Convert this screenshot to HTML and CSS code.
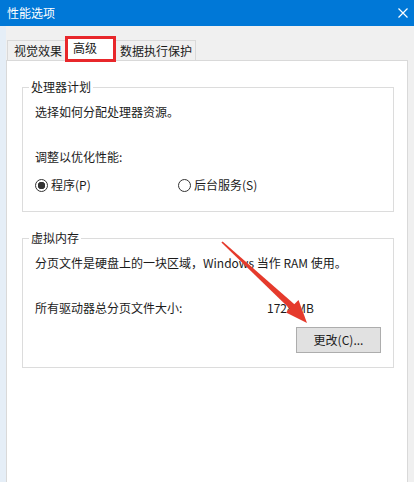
FILE: index.html
```html
<!DOCTYPE html>
<html lang="zh-CN">

<head>
  <meta charset="UTF-8" />
  <meta name="viewport" content="width=device-width, initial-scale=1.0" />
  <title>性能选项</title>
  <link rel="stylesheet" href="styles.css">
</head>

<body>
  <div class="titlebar">
    <span class="title">性能选项</span>
    <svg class="close" viewBox="0 0 10 10" width="10" height="10">
      <path d="M0.5 0.5 L9.5 9.5 M9.5 0.5 L0.5 9.5" stroke="#fff" stroke-width="1.2" fill="none" />
    </svg>
  </div>

  <div class="content">
    <div class="tabs">
      <div class="tab first">视觉效果</div>
      <div class="tab active">高级</div>
      <div class="tab last">数据执行保护</div>
    </div>

    <div class="panel">
      <fieldset class="group">
        <legend>处理器计划</legend>
        <p>选择如何分配处理器资源。</p>
        <p class="spaced">调整以优化性能:</p>
        <div class="radios">
          <label class="radio"><span class="dot checked"></span>程序(P)</label>
          <label class="radio"><span class="dot"></span>后台服务(S)</label>
        </div>
      </fieldset>

      <fieldset class="group vm">
        <legend>虚拟内存</legend>
        <p>分页文件是硬盘上的一块区域，Windows 当作 RAM 使用。</p>
        <div class="size spaced">
          <span>所有驱动器总分页文件大小:</span>
          <span>1728 MB</span>
        </div>
        <button class="change">更改(C)...</button>
      </fieldset>
    </div>
  </div>

  <!-- red annotation arrow drawn over the dialog -->
  <svg class="arrow" viewBox="0 0 414 482" width="414" height="482">
    <polygon points="221.4,242.6 222.6,241.4 296.4,306 291.6,310.4" fill="#e53a2c" />
    <polygon points="307,323 286,312.5 298.5,300" fill="#e53a2c" />
  </svg>
</body>

</html>
```

FILE: styles.css
```css
* {
  margin: 0;
  padding: 0;
  box-sizing: border-box;
}

body {
  width: 414px;
  height: 482px;
  overflow: hidden;
  position: relative;
  font-family: "Noto Sans CJK SC", "Noto Sans", sans-serif;
  font-size: 12px;
  line-height: 16px;
  color: #1b1b1b;
  background: #f0f0f0;
}

.titlebar {
  height: 26px;
  background: #0078d7;
  color: #fff;
  display: flex;
  align-items: center;
  justify-content: space-between;
  padding: 0 6px 0 7px;
}

.content {
  padding: 10px 6px 0 6px;
  background: linear-gradient(to right, #e5eef7 6px, #f0f0f0 6px);
}

.tabs {
  display: flex;
  align-items: flex-end;
  height: 24px;
  padding-left: 1px;
}

.tab {
  height: 20px;
  line-height: 19px;
  border: 1px solid #d9d9d9;
  border-bottom: none;
  background: #f0f0f0;
  white-space: nowrap;
}

.tab.first {
  padding: 0 3px 0 6px;
}

.tab.last {
  padding: 0 3px 0 4px;
}

.tab.active {
  position: relative;
  z-index: 1;
  width: 51px;
  height: 26px;
  margin: 0 -1px -2px -1px;
  line-height: 18px;
  padding-left: 5px;
  background: #fff;
  border: 3px solid #e8272b;
}

.panel {
  height: 430px;
  background: #fff;
  border: 1px solid #d9d9d9;
  padding: 18px 13px 0 15px;
}

.group {
  border: 1px solid #dcdcdc;
  padding: 9px 12px 18px 12px;
}

.group legend {
  padding: 0 2px;
  margin-left: -6px;
  line-height: 16px;
}

.group.vm {
  margin-top: 18px;
  padding-bottom: 14px;
  display: flex;
  flex-direction: column;
}

.spaced {
  margin-top: 29px;
}

.radios {
  display: grid;
  grid-template-columns: 143px auto;
  margin-top: 12px;
}

.radio {
  display: flex;
  align-items: center;
  gap: 3px;
}

.dot {
  width: 13px;
  height: 13px;
  border: 1px solid #333;
  border-radius: 50%;
  background: #fff;
}

.dot.checked {
  background: radial-gradient(circle, #333 3.5px, #fff 4px);
}

.size {
  display: grid;
  grid-template-columns: 232px auto;
}

.change {
  align-self: flex-end;
  margin-top: 11px;
  width: 85px;
  height: 26px;
  font: inherit;
  color: #1b1b1b;
  background: #e1e1e1;
  border: 1px solid #adadad;
}

.arrow {
  position: absolute;
  top: 0;
  left: 0;
  pointer-events: none;
}
```
